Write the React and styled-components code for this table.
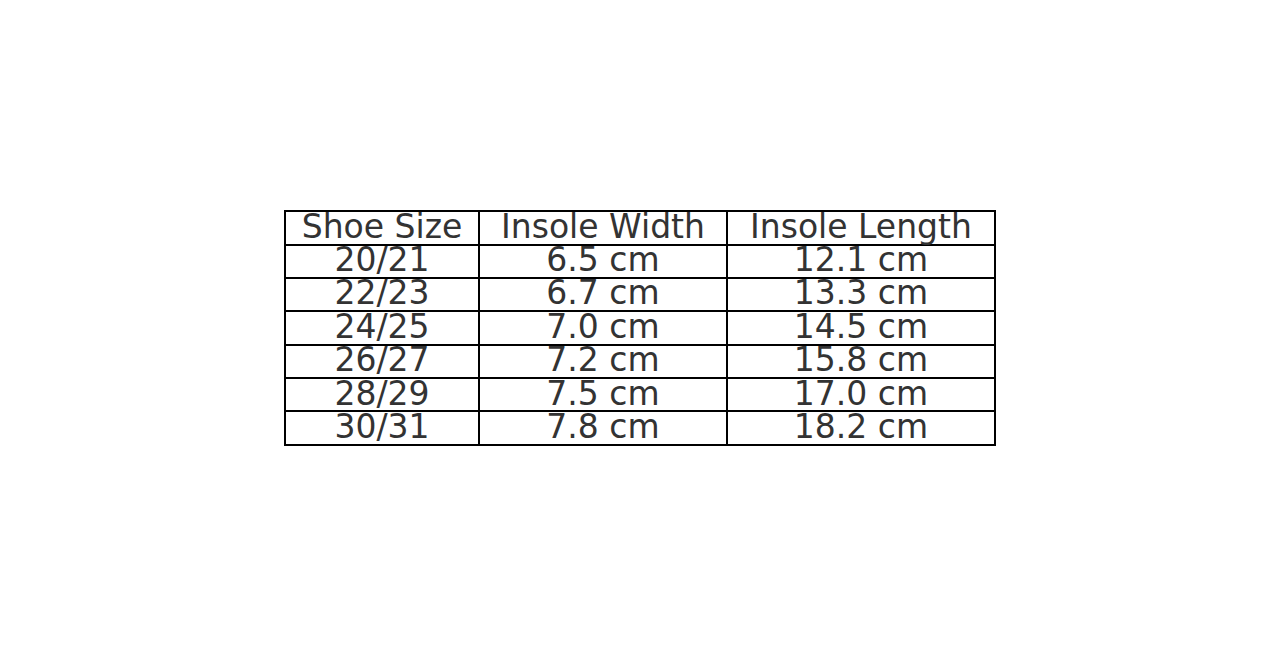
import styled, { createGlobalStyle } from "styled-components";

const rows = [
  ["20/21", "6.5 cm", "12.1 cm"],
  ["22/23", "6.7 cm", "13.3 cm"],
  ["24/25", "7.0 cm", "14.5 cm"],
  ["26/27", "7.2 cm", "15.8 cm"],
  ["28/29", "7.5 cm", "17.0 cm"],
  ["30/31", "7.8 cm", "18.2 cm"],
];

function App() {
  return (
    <>
      <GlobalStyle />
      <Page>
        <SizeTable>
          <colgroup>
            <col style={{ width: 194 }} />
            <col style={{ width: 248 }} />
            <col style={{ width: 268 }} />
          </colgroup>
          <thead>
            <tr>
              <Cell as="th">Shoe Size</Cell>
              <Cell as="th">Insole Width</Cell>
              <Cell as="th">Insole Length</Cell>
            </tr>
          </thead>
          <tbody>
            {rows.map((r) => (
              <tr key={r[0]}>
                {r.map((v, i) => (
                  <Cell key={i}>{v}</Cell>
                ))}
              </tr>
            ))}
          </tbody>
        </SizeTable>
      </Page>
    </>
  );
}

const GlobalStyle = createGlobalStyle`
  html, body {
    margin: 0;
    background: #fff;
  }
`

const Page = styled.div`
  width: 1280px;
  height: 656px;
  display: flex;
  align-items: center;
  justify-content: center;
`

const SizeTable = styled.table`
  border-collapse: collapse;
  table-layout: fixed;
  width: 710px;
  font-family: "DejaVu Sans", sans-serif;
  font-size: 33px;
  color: #333;
`

const Cell = styled.td`
  border: 2px solid #000;
  padding: 1.5px 0 4.9px;
  height: 25px;
  line-height: 25px;
  text-align: center;
  vertical-align: top;
  font-weight: normal;
  white-space: nowrap;
`

export default App;
